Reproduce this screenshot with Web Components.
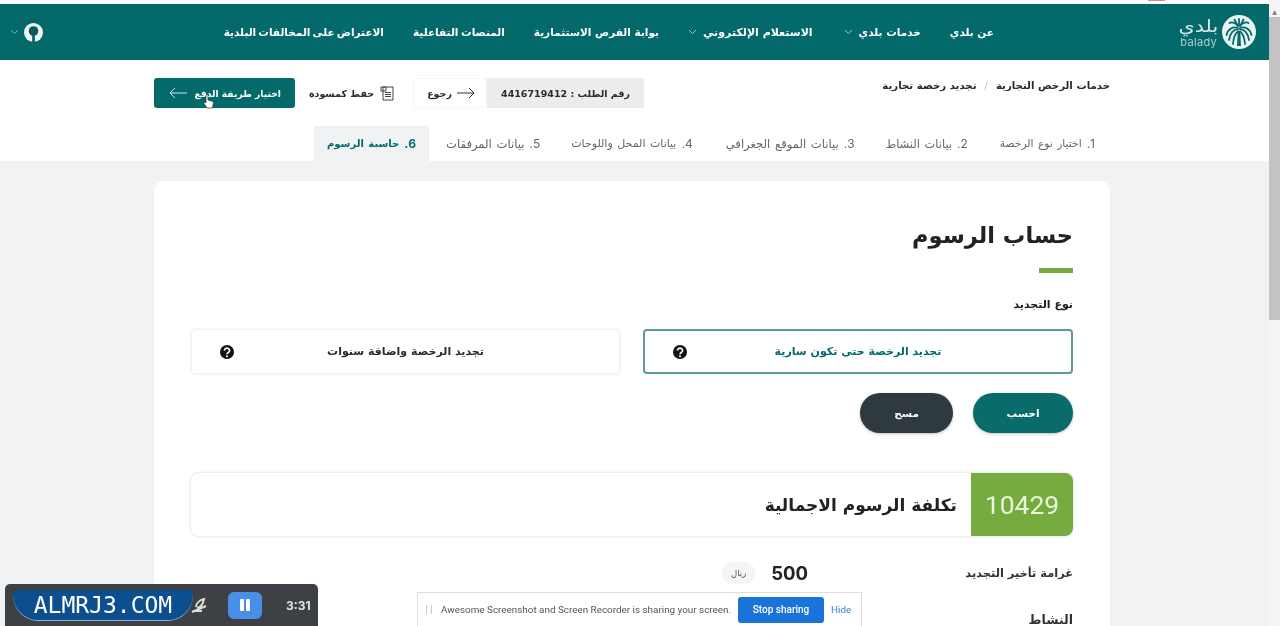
<!DOCTYPE html>
<html lang="ar" dir="rtl">
<head>
<meta charset="utf-8">
<title>حساب الرسوم</title>
<style>
    html, body { margin: 0; height: 626px; overflow: hidden; background: #fff; }
    body { font-family: "DejaVu Sans", sans-serif; color: #222; }
</style>
</head>
<body>
<app-shell>
    <site-header>
        <nav-item>عن بلدي</nav-item>
        <nav-item menu>خدمات بلدي</nav-item>
        <nav-item menu style="font-size:11px;margin-right:2px">الاستعلام الإلكتروني</nav-item>
        <nav-item>بوابة الفرص الاستثمارية</nav-item>
        <nav-item style="word-spacing:-1px">المنصات التفاعلية</nav-item>
        <nav-item style="word-spacing:-1.5px">الاعتراض على المخالفات البلدية</nav-item>
    </site-header>
    <action-bar request="4416719412"></action-bar>
    <step-tabs>
        <step-tab num="1" style="font-size:10.7px">اختيار نوع الرخصة</step-tab>
        <step-tab num="2" style="font-size:11.4px;margin-right:2px">بيانات النشاط</step-tab>
        <step-tab num="3" style="font-size:11.6px;margin-right:1px">بيانات الموقع الجغرافي</step-tab>
        <step-tab num="4" style="margin-right:3px">بيانات المحل واللوحات</step-tab>
        <step-tab num="5" style="font-size:11.6px;margin-right:1px">بيانات المرفقات</step-tab>
        <step-tab num="6" active style="font-size:10px;padding:0 13px;margin-right:2px">حاسبة الرسوم</step-tab>
    </step-tabs>
    <fee-card>
        <option-card selected>تجديد الرخصة حتى تكون سارية</option-card>
        <option-card>تجديد الرخصة واضافة سنوات</option-card>
    </fee-card>
</app-shell>
<page-scrollbar></page-scrollbar>
<recorder-bar></recorder-bar>
<share-bar></share-bar>

<script>
const chevron = `<svg width="9" height="6" viewBox="0 0 9 6" fill="none" stroke="currentColor" stroke-width="1"><path d="M1 1l3.5 3.5L8 1"/></svg>`;
// the reference is a soft video frame
const soft = "filter: blur(.35px);";

class AppShell extends HTMLElement {
    constructor() {
        super();
        this.attachShadow({ mode: "open" }).innerHTML = `
        <style>
            :host { display: block; width: 1269px; height: 626px; margin-right: 11px; overflow: hidden; background: #f0f2f4; ${soft} }
        </style>
        <slot></slot>`;
    }
}

class SiteHeader extends HTMLElement {
    constructor() {
        super();
        this.attachShadow({ mode: "open" }).innerHTML = `
        <style>
            :host { display: block; background: #fff; padding-top: 4px; position: relative; }
            .tick { position: absolute; top: 0; left: 1148px; width: 17px; height: 1px; background: #d98a8a; }
            .bar {
                height: 56px; background: #04696b; color: #fff;
                display: flex; align-items: center; padding: 0 13px 0 10px;
            }
            .logo { display: flex; align-items: center; gap: 5px; width: 80px; margin-left: 182px; flex: none; }
            .word { display: flex; flex-direction: column; align-items: center; color: #d5e9e7; }
            .word b { font-size: 17px; font-weight: 400; line-height: 20px; display: inline-block; transform: scaleX(1.22); }
            .word span { font: 400 11px/13px "Inter", sans-serif; letter-spacing: .3px; color: #a9d3d0; }
            nav { display: flex; align-items: center; gap: 29px; flex: 1; }
            .side { display: flex; align-items: center; gap: 5px; color: #7fb3b2; }
        </style>
        <div class="tick"></div>
        <div class="bar">
            <div class="logo">
                <svg width="34" height="34" viewBox="0 0 34 34" fill="none">
                    <circle cx="17" cy="17" r="17" fill="#e9f4f3"/>
                    <g stroke="#04696b" stroke-width="1.8" stroke-linecap="round">
                        <path d="M16 13C11 11 6 14 4.500 20"/>
                        <path d="M16 14.500C12 14 8 18 7 25"/>
                        <path d="M16 16.500C14 18 11.500 22 11 29"/>
                        <path d="M18 13C23 11 28 14 29.500 20"/>
                        <path d="M18 14.500C22 14 26 18 27 25"/>
                        <path d="M18 16.500C20 18 22.500 22 23 29"/>
                        <path d="M16 11C14 8 10 6.500 7.500 8"/>
                        <path d="M18 11C20 8 24 6.500 26.500 8"/>
                        <path d="M17 10.500V4"/>
                        <path d="M15.500 10.500L12.500 4.500"/>
                        <path d="M18.500 10.500L21.500 4.500"/>
                    </g>
                    <path d="M15.800 16h2.400l.8 15h-4z" fill="#04696b"/>
                </svg>
                <div class="word"><b>بلدي</b><span>balady</span></div>
            </div>
            <nav><slot></slot></nav>
            <div class="side">
                <svg width="19" height="19" viewBox="0 0 19 19">
                    <circle cx="9.500" cy="9.500" r="9.500" fill="#eef6f5"/>
                    <circle cx="9.500" cy="8" r="4.800" fill="#0a5a5c"/>
                    <path d="M8.200 11h2.600v8H8.200z" fill="#0a5a5c"/>
                </svg>
                ${chevron}
            </div>
        </div>`;
    }
}

class NavItem extends HTMLElement {
    constructor() {
        super();
        this.attachShadow({ mode: "open" }).innerHTML = `
        <style>
            :host { display: inline-flex; align-items: center; gap: 6px; color: #fff; font-size: 10.5px; font-weight: 700; white-space: nowrap; }
            .c { color: #9cc6c5; display: ${this.hasAttribute("menu") ? "inline-flex" : "none"}; }
        </style>
        <slot></slot><span class="c">${chevron}</span>`;
    }
}

class ActionBar extends HTMLElement {
    constructor() {
        super();
        const req = this.getAttribute("request");
        this.attachShadow({ mode: "open" }).innerHTML = `
        <style>
            :host { display: flex; justify-content: space-between; background: #fff; height: 66px; padding: 0 159px 0 154px; }
            .crumb { display: flex; gap: 8px; font-size: 10.2px; font-weight: 700; color: #2b2b2b; padding-top: 20px; white-space: nowrap; }
            .crumb i { font-style: normal; color: #bbb; font-weight: 400; }
            .tools { display: flex; height: 30px; margin-top: 18px; font-size: 9.5px; font-weight: 700; color: #2b2b2b; white-space: nowrap; }
            .tools > div { display: flex; align-items: center; box-sizing: border-box; }
            .num { background: #eaeced; width: 157px; justify-content: center; border-radius: 0 3px 3px 0; }
            .back { width: 74px; justify-content: center; gap: 5px; padding-left: 2px; box-shadow: inset 0 0 0 1px #f6f6f6; }
            .save { width: 118px; justify-content: center; gap: 6px; padding-right: 4px; }
            .pay { width: 141px; padding-right: 14px; gap: 7px; background: #04696b; color: #fff; border-radius: 3px; position: relative; font-size: 9.2px; }
            .hand { position: absolute; left: 49px; top: 16px; }
        </style>
        <div class="crumb"><span>خدمات الرخص التجارية</span><i>/</i><span>تجديد رخصة تجارية</span></div>
        <div class="tools">
            <div class="num">رقم الطلب : ${req}</div>
            <div class="back">
                <svg width="18" height="12" viewBox="0 0 18 12" fill="none" stroke="#333" stroke-width="1"><path d="M0 6h17M12 1l5 5-5 5"/></svg>
                <span>رجوع</span>
            </div>
            <div class="save">
                <svg width="15" height="15" viewBox="0 0 15 15" fill="none" stroke="#444" stroke-width="1"><path d="M3 1h10v13H3zM1 1h5v4H1zM5 6.500h6M5 8.500h6M5 10.500h6"/></svg>
                <span>حفظ كمسودة</span>
            </div>
            <div class="pay">
                <span>اختيار طريقة الدفع</span>
                <svg width="18" height="12" viewBox="0 0 18 12" fill="none" stroke="#cfe3e2" stroke-width="1"><path d="M18 6H1M6 1L1 6l5 5"/></svg>
                <svg class="hand" width="11" height="15" viewBox="0 0 11 15"><path d="M3 1.500a1 1 0 0 1 2 0V6l4 1.200c1 .3 1.500 1 1.300 2L9.500 14H4L1 9.500c-.5-1 .7-1.800 1.500-1L3 9z" fill="#fff" stroke="#333" stroke-width=".7"/></svg>
            </div>
        </div>`;
    }
}

class StepTabs extends HTMLElement {
    constructor() {
        super();
        this.attachShadow({ mode: "open" }).innerHTML = `
        <style>
            :host { display: flex; background: #fff; height: 35px; padding-right: 159px; }
        </style>
        <slot></slot>`;
    }
}

class StepTab extends HTMLElement {
    constructor() {
        super();
        const active = this.hasAttribute("active");
        this.attachShadow({ mode: "open" }).innerHTML = `
        <style>
            :host {
                display: flex; align-items: center; gap: 5px; padding: 0 15px; white-space: nowrap;
                font-size: 11px; word-spacing: 1px; color: ${active ? "#04696b" : "#666"}; font-weight: ${active ? 700 : 400};
                background: ${active ? "#f0f2f4" : "transparent"};
            }
            b { font: ${active ? 700 : 400} 12px "Inter", sans-serif; }
        </style>
        <b>${this.getAttribute("num")}.</b><slot></slot>`;
    }
}

class FeeCard extends HTMLElement {
    constructor() {
        super();
        this.attachShadow({ mode: "open" }).innerHTML = `
        <style>
            :host {
                display: block; width: 956px; height: 600px; box-sizing: border-box;
                margin: 20px 159px 0 154px; padding: 36px 37px 0; background: #fff; border-radius: 10px;
            }
            h1 { margin: 0; font-size: 22.5px; line-height: 36px; font-weight: 700; color: #222; }
            .rule { width: 34px; height: 5px; background: #76ab3f; margin: 15px 0 24px; }
            label { display: block; font-size: 11px; font-weight: 700; line-height: 16px; margin-bottom: 16px; }
            .opts { display: grid; grid-template-columns: 430px 429px; gap: 23px; }
            .btns { display: flex; gap: 20px; margin-top: 19px; }
            .btn { height: 40px; border-radius: 20px; display: flex; align-items: center; justify-content: center; color: #fff; font-size: 10.5px; font-weight: 700; box-shadow: 0 1px 3px rgba(0,0,0,.25); }
            .calc { width: 100px; background: #0a6b6b; }
            .clear { width: 93px; background: #2f3a3f; }
            .total { display: flex; align-items: stretch; height: 63px; margin-top: 40px; border-radius: 8px; box-shadow: 0 0 3px rgba(0,0,0,.18); }
            .sum { width: 102px; background: #76ab3f; color: #e9f4dc; font: 400 26.5px "Roboto", sans-serif; display: flex; align-items: center; justify-content: center; border-radius: 0 8px 8px 0; }
            .cap { display: flex; align-items: center; padding-right: 14px; font-size: 17px; font-weight: 700; color: #222; }
            .row { display: flex; align-items: center; height: 46px; font-size: 11.4px; color: #333; font-weight: 700; }
            .row .name { width: 265px; }
            .row .val { font: 700 18.5px "Inter", sans-serif; color: #222; }
            .row .unit { margin-right: 16px; width: 33px; height: 22px; line-height: 22px; text-align: center; background: #f5f5f5; border-radius: 10px; font-size: 8.5px; font-weight: 400; color: #555; }
        </style>
        <h1>حساب الرسوم</h1>
        <div class="rule"></div>
        <label>نوع التجديد</label>
        <div class="opts"><slot></slot></div>
        <div class="btns">
            <div class="btn calc">احسب</div>
            <div class="btn clear">مسح</div>
        </div>
        <div class="total">
            <div class="sum">10429</div>
            <div class="cap">تكلفة الرسوم الاجمالية</div>
        </div>
        <div class="row" style="margin-top:14px">
            <span class="name">غرامة تأخير التجديد</span>
            <span class="val">500</span>
            <span class="unit">ريال</span>
        </div>
        <div class="row" style="font-size:12.5px"><span class="name">النشاط</span></div>`;
    }
}

class OptionCard extends HTMLElement {
    constructor() {
        super();
        const sel = this.hasAttribute("selected");
        this.attachShadow({ mode: "open" }).innerHTML = `
        <style>
            :host {
                display: flex; align-items: center; height: 45px; box-sizing: border-box; position: relative;
                justify-content: center;
                font-size: 11px; font-weight: 700; color: ${sel ? "#04696b" : "#2b2b2b"};
                border-radius: 4px; border: ${sel ? "2px solid #5f9a98" : "1px solid #f1f1f1"};
                box-shadow: ${sel ? "none" : "0 0 3px rgba(0,0,0,.08)"};
            }
            svg { position: absolute; left: 28px; top: 50%; transform: translateY(-50%); }
        </style>
        <slot></slot>
        <svg width="14" height="14" viewBox="0 0 14 14">
            <circle cx="7" cy="7" r="7" fill="#111"/>
            <path d="M4.400 5.500a2.600 2.300 0 1 1 3.900 2c-.8.500-1.300.9-1.300 1.700" fill="none" stroke="#fff" stroke-width="1.7"/>
            <circle cx="7" cy="11.200" r="1" fill="#fff"/>
        </svg>`;
    }
}

class PageScrollbar extends HTMLElement {
    constructor() {
        super();
        this.attachShadow({ mode: "open" }).innerHTML = `
        <style>
            :host { position: fixed; top: 0; right: 0; width: 11px; height: 626px; background: #f4f4f4; }
            .up { height: 17px; color: #777; font-size: 6px; text-align: center; line-height: 24px; }
            .thumb { height: 303px; background: #c3c3c3; }
        </style>
        <div class="up">▲</div>
        <div class="thumb"></div>`;
    }
}

class RecorderBar extends HTMLElement {
    constructor() {
        super();
        this.attachShadow({ mode: "open" }).innerHTML = `
        <style>
            :host {
                position: fixed; left: 5px; bottom: 0; width: 313px; height: 42px; box-sizing: border-box;
                background: #3d4045; border-radius: 5px 5px 0 0; display: flex; align-items: center;
                direction: ltr; color: #f2f2f2; ${soft}
            }
            .mark {
                width: 180px; height: 31px; margin: 0 0 -1px 8px; background: #0c4f8f; border-radius: 6px 6px 28px 28px;
                border-bottom: 1px solid #8fb3d6; box-sizing: border-box;
                font: 400 23px "DejaVu Sans Mono", monospace; color: #fff; text-align: center; line-height: 30px;
            }
            svg.pen { margin-left: -3px; flex: none; }
            .mark, .pause, .time { flex: none; }
            .pause { width: 34px; height: 27px; border-radius: 6px; background: #4a8fe7; margin-left: 20px; display: flex; align-items: center; justify-content: center; gap: 2px; }
            .pause i { width: 4px; height: 12px; background: #fff; border-radius: 1px; }
            .time { margin-left: 24px; font: 700 12px "Inter", sans-serif; color: #e3e3e3; }
        </style>
        <div class="mark">ALMRJ3.COM</div>
        <svg class="pen" width="18" height="18" viewBox="0 0 18 18" fill="none" stroke="#ddd" stroke-width="2"><path d="M6 11c0-4 4-7 8-8-1 4-2 8-7 9M2 16l14-6M3 15h9"/></svg>
        <div class="pause"><i></i><i></i></div>
        <div class="time">3:31</div>`;
    }
}

class ShareBar extends HTMLElement {
    constructor() {
        super();
        this.attachShadow({ mode: "open" }).innerHTML = `
        <style>
            :host {
                position: fixed; left: 417px; bottom: 0; width: 445px; height: 34px; box-sizing: border-box;
                background: #fff; border: 1px solid #dfdfdf; border-bottom: 0; display: flex; align-items: center;
                direction: ltr; padding: 0 9px 0 8px; font: 400 9.9px "Roboto", sans-serif; color: #555; white-space: nowrap; ${soft}
            }
            .grip { width: 4px; height: 9px; border: solid #ccc; border-width: 0 1px; margin-right: 9px; }
            .msg { flex: 1; }
            .stop { background: #1a73d8; color: #fff; width: 86px; height: 26px; border-radius: 3px; display: flex; align-items: center; justify-content: center; font-weight: 500; font-size: 10px; }
            .hide { color: #3b82d6; margin-left: 7px; width: 21px; }
        </style>
        <span class="grip"></span>
        <span class="msg">Awesome Screenshot and Screen Recorder is sharing your screen.</span>
        <span class="stop">Stop sharing</span>
        <span class="hide">Hide</span>`;
    }
}

customElements.define("app-shell", AppShell);
customElements.define("site-header", SiteHeader);
customElements.define("nav-item", NavItem);
customElements.define("action-bar", ActionBar);
customElements.define("step-tabs", StepTabs);
customElements.define("step-tab", StepTab);
customElements.define("fee-card", FeeCard);
customElements.define("option-card", OptionCard);
customElements.define("page-scrollbar", PageScrollbar);
customElements.define("recorder-bar", RecorderBar);
customElements.define("share-bar", ShareBar);
</script>
</body>
</html>
